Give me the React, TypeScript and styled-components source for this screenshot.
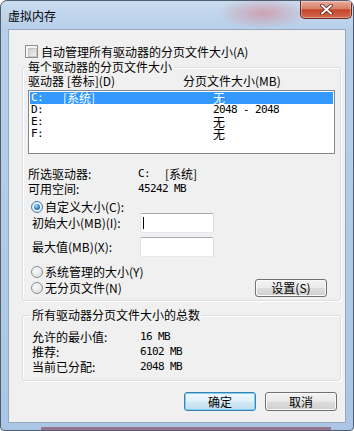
import styled, { createGlobalStyle, css } from 'styled-components'

const GlobalStyle = createGlobalStyle`
  html, body {
    margin: 0;
    padding: 0;
    background: #ffffff;
  }
  body {
    font-family: "Noto Sans CJK SC", "Liberation Sans", sans-serif;
    font-size: 12px;
    color: #000000;
  }
  * {
    box-sizing: border-box;
  }
`

const Window = styled.div`
  width: 354px;
  height: 431px;
  border: 1px solid #4f5e70;
  border-radius: 7px 7px 4px 4px;
  display: flex;
  flex-direction: column;
  overflow: hidden;
  background:
    radial-gradient(ellipse 46px 16px at 262px 12px, rgba(214, 120, 130, 0.55), rgba(214, 120, 130, 0) 100%),
    linear-gradient(to top, rgba(130, 50, 70, 0.55) 0, rgba(130, 50, 70, 0.55) 3px, transparent 3px) 40px 0 / 290px 100% no-repeat,
    linear-gradient(180deg, #c9dcf0 0%, #b7cfe9 28px, #abc6e4 100%);
`

const TitleBar = styled.div`
  height: 28px;
  display: flex;
  justify-content: space-between;
  align-items: flex-start;
  flex-shrink: 0;
`

const Title = styled.span`
  padding: 9px 0 0 7px;
  line-height: 12px;
  font-size: 12px;
  color: #000000;
`

const CloseButton = styled.div`
  width: 52px;
  height: 18px;
  margin-right: 1px;
  border: 1px solid #6e2519;
  border-top: none;
  border-radius: 0 0 5px 5px;
  background: linear-gradient(180deg, #e9ab9e 0%, #d98068 45%, #c4432b 52%, #d46a50 100%);
  box-shadow: inset 0 0 0 1px rgba(255, 255, 255, 0.35);
  display: flex;
  align-items: center;
  justify-content: center;
`

const Client = styled.div`
  flex: 1;
  margin: 0 7px 7px 7px;
  border: 1px solid #95a8c0;
  background: #f0f0f0;
  padding: 15px 4px 0 13px;
  display: flex;
  flex-direction: column;
`

const CheckRow = styled.label`
  display: flex;
  align-items: center;
  gap: 3px;
  height: 13px;
  margin-left: 3px;
  line-height: 13px;
`

const CheckBox = styled.span`
  width: 13px;
  height: 13px;
  border: 1px solid #8e8f8f;
  background: #f5f5f5;
  padding: 2px;
  flex-shrink: 0;

  &::after {
    content: '';
    display: block;
    width: 100%;
    height: 100%;
    border: 1px solid #c4c4c4;
    background: linear-gradient(135deg, #cdcdcd 0%, #f2f2f2 100%);
  }
`

const Group = styled.fieldset<{ $top: number }>`
  margin: ${({ $top }) => $top}px 0 0 0;
  border: 1px solid #d5dfe5;
  border-radius: 3px;
  box-shadow: inset 1px 1px 0 #ffffff, 1px 1px 0 #ffffff;
  min-width: 0;
`

const Legend = styled.legend`
  padding: 0 2px;
  margin-left: -2px;
  line-height: 12px;
  font-size: 12px;
`

const DriveGroup = styled(Group)`
  padding: 2px 5px 3px 5px;
`

const TotalGroup = styled(Group)`
  padding: 8px 5px 6px 9px;
`

const Columns = styled.div`
  display: flex;
  height: 12px;
  line-height: 12px;
`

const DriveHead = styled.span`
  width: 155px;
`

const ListBox = styled.div`
  margin-top: 3px;
  height: 64px;
  border: 1px solid #828790;
  background: #ffffff;
  padding: 1px;
`

const ListRow = styled.div<{ $selected?: boolean }>`
  display: flex;
  align-items: center;
  height: 12px;
  line-height: 12px;
  padding-left: 1px;
  ${({ $selected }) =>
    $selected &&
    css`
      background: #3399ff;
      color: #ffffff;
    `}
`

const DriveCell = styled.span`
  width: 182px;
  display: flex;
  align-items: center;
`

// SimSun 的半角字元每個 6px 寬
const Mono = styled.span`
  font-family: "DejaVu Sans Mono", "Liberation Mono", monospace;
  font-size: 11px;
  letter-spacing: -0.62px;
  white-space: pre;
`

const DriveLetter = styled(Mono)`
  width: 32px;
`

const InfoBlock = styled.div`
  margin-top: 12px;
`

const InfoRow = styled.div<{ $label: number }>`
  display: flex;
  align-items: center;
  height: 15px;
  line-height: 15px;

  & > span:first-child {
    width: ${({ $label }) => $label}px;
    flex-shrink: 0;
  }
`

const VolumeTag = styled.span`
  margin-left: 15px;
`

const RadioRow = styled.label<{ $top: number }>`
  display: flex;
  align-items: center;
  gap: 2px;
  height: 12px;
  line-height: 12px;
  margin-top: ${({ $top }) => $top}px;
  padding-left: 3px;
`

const Radio = styled.span<{ $checked?: boolean }>`
  width: 12px;
  height: 12px;
  border-radius: 50%;
  border: 1px solid #8c8f92;
  background: radial-gradient(circle at 40% 35%, #fbfbfb 0%, #d9d9d9 100%);
  display: flex;
  align-items: center;
  justify-content: center;
  flex-shrink: 0;

  &::after {
    content: '';
    width: 6px;
    height: 6px;
    border-radius: 50%;
    background: radial-gradient(circle at 40% 35%, #b7e3ff 0%, #3a8ad0 45%, #164c86 100%);
    display: ${({ $checked }) => ($checked ? 'block' : 'none')};
  }

  ${({ $checked }) =>
    $checked &&
    css`
      border-color: #4d7ba3;
      background: radial-gradient(circle, #ffffff 30%, #bcd6ec 100%);
    `}
`

const FieldRow = styled.div<{ $top: number }>`
  display: flex;
  align-items: center;
  margin-top: ${({ $top }) => $top}px;
  padding-left: 4px;
  line-height: 12px;
`

const FieldLabel = styled.span`
  width: 108px;
`

const TextBox = styled.div`
  width: 74px;
  height: 20px;
  background: #ffffff;
  border: 1px solid;
  border-color: #abadb3 #dbdfe6 #e3e9ef #e2e3ea;
  border-radius: 2px;
  padding: 3px 2px;
`

const Caret = styled.span`
  display: block;
  width: 1px;
  height: 12px;
  background: #000000;
`

const LastRow = styled.div`
  display: flex;
  align-items: center;
  justify-content: space-between;
  height: 18px;
  margin-top: 1px;
  padding-right: 8px;
`

const PushButton = styled.div<{ $default?: boolean; $height?: number }>`
  width: 72px;
  height: ${({ $height }) => $height ?? 19}px;
  border: 1px solid #707070;
  border-radius: 3px;
  background: linear-gradient(180deg, #f2f2f2 0%, #ebebeb 48%, #dddddd 52%, #cfcfcf 100%);
  box-shadow: inset 0 0 0 1px #fbfbfb;
  display: flex;
  align-items: center;
  justify-content: center;
  line-height: 12px;

  ${({ $default }) =>
    $default &&
    css`
      border-color: #3c7fb1;
      background: linear-gradient(180deg, #eef7fc 0%, #e3f1fa 48%, #d2e8f5 52%, #c2dff1 100%);
      box-shadow: inset 0 0 0 1px #7cd3f7;
    `}
`

const ButtonBar = styled.div`
  display: flex;
  justify-content: flex-end;
  gap: 9px;
  margin-top: 11px;
  padding-right: 4px;
`

const drives = [
  { drive: 'C:', label: '[系统]', size: '无', selected: true },
  { drive: 'D:', size: '2048 - 2048' },
  { drive: 'E:', size: '无' },
  { drive: 'F:', size: '无' },
]

const totals = [
  { label: '允许的最小值:', value: '16 MB' },
  { label: '推荐:', value: '6102 MB' },
  { label: '当前已分配:', value: '2048 MB' },
]

const isAscii = (s: string) => /^[\x20-\x7e]+$/.test(s)

function CloseIcon() {
  return (
    <svg width="13" height="11" viewBox="0 0 13 11">
      <path d="M2 1.5 L11 9.5 M11 1.5 L2 9.5" stroke="#5a1d14" strokeWidth="3.6" strokeLinecap="round" />
      <path d="M2 1.5 L11 9.5 M11 1.5 L2 9.5" stroke="#ffffff" strokeWidth="2" strokeLinecap="round" />
    </svg>
  )
}

export default function App() {
  return (
    <>
      <GlobalStyle />
      <Window>
        <TitleBar>
          <Title>虚拟内存</Title>
          <CloseButton>
            <CloseIcon />
          </CloseButton>
        </TitleBar>
        <Client>
          <CheckRow>
            <CheckBox />
            <span>自动管理所有驱动器的分页文件大小(A)</span>
          </CheckRow>

          <DriveGroup $top={3}>
            <Legend>每个驱动器的分页文件大小</Legend>
            <Columns>
              <DriveHead>驱动器 [卷标](D)</DriveHead>
              <span>分页文件大小(MB)</span>
            </Columns>
            <ListBox>
              {drives.map((d) => (
                <ListRow key={d.drive} $selected={d.selected}>
                  <DriveCell>
                    <DriveLetter>{d.drive}</DriveLetter>
                    {d.label && <span>{d.label}</span>}
                  </DriveCell>
                  {isAscii(d.size) ? <Mono>{d.size}</Mono> : <span>{d.size}</span>}
                </ListRow>
              ))}
            </ListBox>

            <InfoBlock>
              <InfoRow $label={110}>
                <span>所选驱动器:</span>
                <Mono>C:</Mono>
                <VolumeTag>[系统]</VolumeTag>
              </InfoRow>
              <InfoRow $label={110}>
                <span>可用空间:</span>
                <Mono>45242 MB</Mono>
              </InfoRow>
            </InfoBlock>

            <RadioRow $top={5}>
              <Radio $checked />
              <span>自定义大小(C):</span>
            </RadioRow>
            <FieldRow $top={0}>
              <FieldLabel>初始大小(MB)(I):</FieldLabel>
              <TextBox>
                <Caret />
              </TextBox>
            </FieldRow>
            <FieldRow $top={4}>
              <FieldLabel>最大值(MB)(X):</FieldLabel>
              <TextBox />
            </FieldRow>
            <RadioRow $top={9}>
              <Radio />
              <span>系统管理的大小(Y)</span>
            </RadioRow>
            <LastRow>
              <RadioRow $top={0}>
                <Radio />
                <span>无分页文件(N)</span>
              </RadioRow>
              <PushButton $height={18}>设置(S)</PushButton>
            </LastRow>
          </DriveGroup>

          <TotalGroup $top={8}>
            <Legend>所有驱动器分页文件大小的总数</Legend>
            {totals.map((t) => (
              <InfoRow key={t.label} $label={108}>
                <span>{t.label}</span>
                <Mono>{t.value}</Mono>
              </InfoRow>
            ))}
          </TotalGroup>

          <ButtonBar>
            <PushButton $default>确定</PushButton>
            <PushButton>取消</PushButton>
          </ButtonBar>
        </Client>
      </Window>
    </>
  )
}
